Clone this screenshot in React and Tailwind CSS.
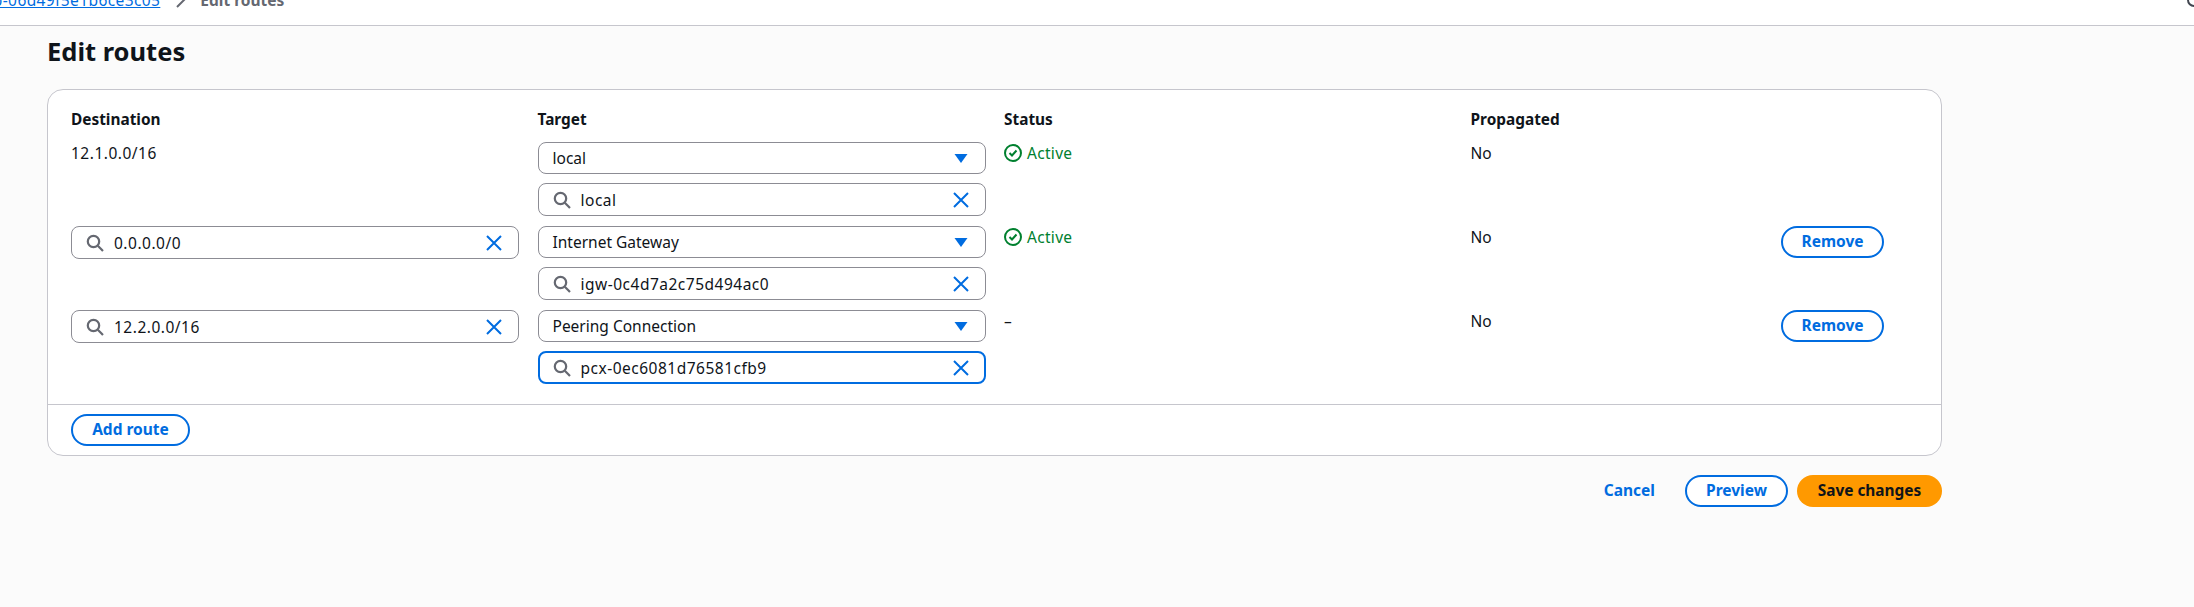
import React from 'react';

const FONT = "font-['Noto_Sans',sans-serif]";

function SearchIcon() {
  return (
    <svg width="18" height="18" viewBox="0 0 18 18" fill="none" stroke="#656871" strokeWidth="2.2" className="shrink-0">
      <circle cx="7.5" cy="7.5" r="5.7" />
      <path d="M11.8 11.8 17 17" />
    </svg>
  );
}

function ClearIcon() {
  return (
    <svg width="16" height="16" viewBox="0 0 16 16" fill="none" stroke="#006ce0" strokeWidth="2" className="shrink-0">
      <path d="M1 1l14 14M15 1 1 15" />
    </svg>
  );
}

function CaretIcon() {
  return (
    <svg width="16" height="16" viewBox="0 0 16 16" fill="#006ce0" className="shrink-0">
      <path d="M1.5 4h13L8 13z" />
    </svg>
  );
}

function ActiveStatus() {
  return (
    <div className="flex items-center gap-[5px] pt-[1px] text-[15.5px] leading-5 tracking-[0.3px] text-[#00802f]">
      <svg width="18" height="18" viewBox="0 0 18 18" fill="none" stroke="#00802f" strokeWidth="2">
        <circle cx="9" cy="9" r="8" />
        <path d="M5.5 9l2.5 2.5L12.5 6.5" />
      </svg>
      Active
    </div>
  );
}

function SearchBox({ value, focused }) {
  return (
    <div
      className={
        focused
          ? 'flex h-[33px] items-center rounded-lg border-2 border-[#006ce0] bg-white pl-[13px] pr-[15px]'
          : 'flex h-[33px] items-center rounded-lg border border-[#8c8c94] bg-white pl-[14px] pr-[16px]'
      }
    >
      <SearchIcon />
      <span className="ml-[10px] flex-1 text-[15.5px] leading-5 tracking-[0.5px] text-[#0f141a]">{value}</span>
      <ClearIcon />
    </div>
  );
}

function SelectBox({ value }) {
  return (
    <div className="flex h-[32px] items-center rounded-lg border border-[#8c8c94] bg-white pl-[14px] pr-[16px]">
      <span className="flex-1 text-[15.5px] leading-5 text-[#0f141a]">{value}</span>
      <CaretIcon />
    </div>
  );
}

function RemoveButton() {
  return (
    <button className="h-[32px] w-[103px] rounded-full border-2 border-[#006ce0] bg-white text-[15.5px] font-bold text-[#006ce0]">
      Remove
    </button>
  );
}

const routes = [
  { dest: null, kind: 'local', id: 'local', active: true },
  { dest: '0.0.0.0/0', kind: 'Internet Gateway', id: 'igw-0c4d7a2c75d494ac0', active: true, removable: true },
  { dest: '12.2.0.0/16', kind: 'Peering Connection', id: 'pcx-0ec6081d76581cfb9', focused: true, removable: true },
];

export default function App() {
  return (
    <div className={`${FONT} min-h-[607px] bg-[#fbfbfb] text-[#0f141a]`}>
      <div className="relative h-[26px] overflow-hidden border-b border-[#c6c6cd] bg-white">
        <div className="-mt-[10px] flex items-center text-[15.5px] leading-5">
          <a className="-ml-[20px] tracking-[0.4px] text-[#006ce0] underline">rtb-06d49f5e1b6ce3c05</a>
          <svg width="16" height="16" viewBox="0 0 16 16" fill="none" stroke="#656871" strokeWidth="2" className="mx-[12px]">
            <path d="M5 1l7 7-7 7" />
          </svg>
          <span className="font-bold text-[#656871]">Edit routes</span>
        </div>
        <svg width="16" height="16" viewBox="0 0 16 16" fill="none" stroke="#424650" strokeWidth="2" className="absolute -right-[8px] -top-[8px]">
          <circle cx="8" cy="8" r="6" />
        </svg>
      </div>

      <div className="w-[1942px] pl-[47px]">
        <h1 className="pt-[10px] text-[25.5px] font-bold leading-[31px]">Edit routes</h1>

        <div className="mt-[22px] rounded-2xl border border-[#c6c6cd] bg-white">
          <div className="pl-[23px] pr-[57px] pt-[20px] pb-[20px]">
            <div className="grid grid-cols-[448px_448px_448px_1fr_auto] gap-x-[18.5px] gap-y-[10px]">
              <div className="pb-[2px] text-[15.4px] font-bold leading-5">Destination</div>
              <div className="pb-[2px] text-[15.4px] font-bold leading-5">Target</div>
              <div className="pb-[2px] text-[15.4px] font-bold leading-5">Status</div>
              <div className="col-span-2 pb-[2px] text-[15.4px] font-bold leading-5">Propagated</div>

              {routes.map((r) => (
                <React.Fragment key={r.id}>
                  <div>
                    {r.dest ? (
                      <SearchBox value={r.dest} />
                    ) : (
                      <div className="pt-[1px] text-[15.5px] leading-5 tracking-[0.5px]">12.1.0.0/16</div>
                    )}
                  </div>
                  <div className="flex flex-col gap-[9px]">
                    <SelectBox value={r.kind} />
                    <SearchBox value={r.id} focused={r.focused} />
                  </div>
                  <div>{r.active ? <ActiveStatus /> : <div className="pt-[1px] text-[15.5px] leading-5">–</div>}</div>
                  <div className="pt-[1px] text-[15.5px] leading-5">No</div>
                  <div className="w-[103px]">{r.removable && <RemoveButton />}</div>
                </React.Fragment>
              ))}
            </div>
          </div>
          <div className="border-t border-[#c6c6cd] px-[23px] py-[9px]">
            <button className="h-[32px] w-[119px] rounded-full border-2 border-[#006ce0] bg-white text-[15.5px] font-bold text-[#006ce0]">
              Add route
            </button>
          </div>
        </div>

        <div className="mt-[19px] flex items-center justify-end">
          <button className="mr-[30px] text-[15.5px] font-bold text-[#006ce0]">Cancel</button>
          <button className="mr-[9px] h-[32px] w-[103px] rounded-full border-2 border-[#006ce0] bg-white text-[15.5px] font-bold text-[#006ce0]">
            Preview
          </button>
          <button className="h-[32px] w-[145px] rounded-full bg-[#ff9900] text-[15.4px] font-bold text-[#0f141a]">
            Save changes
          </button>
        </div>
      </div>
    </div>
  );
}
